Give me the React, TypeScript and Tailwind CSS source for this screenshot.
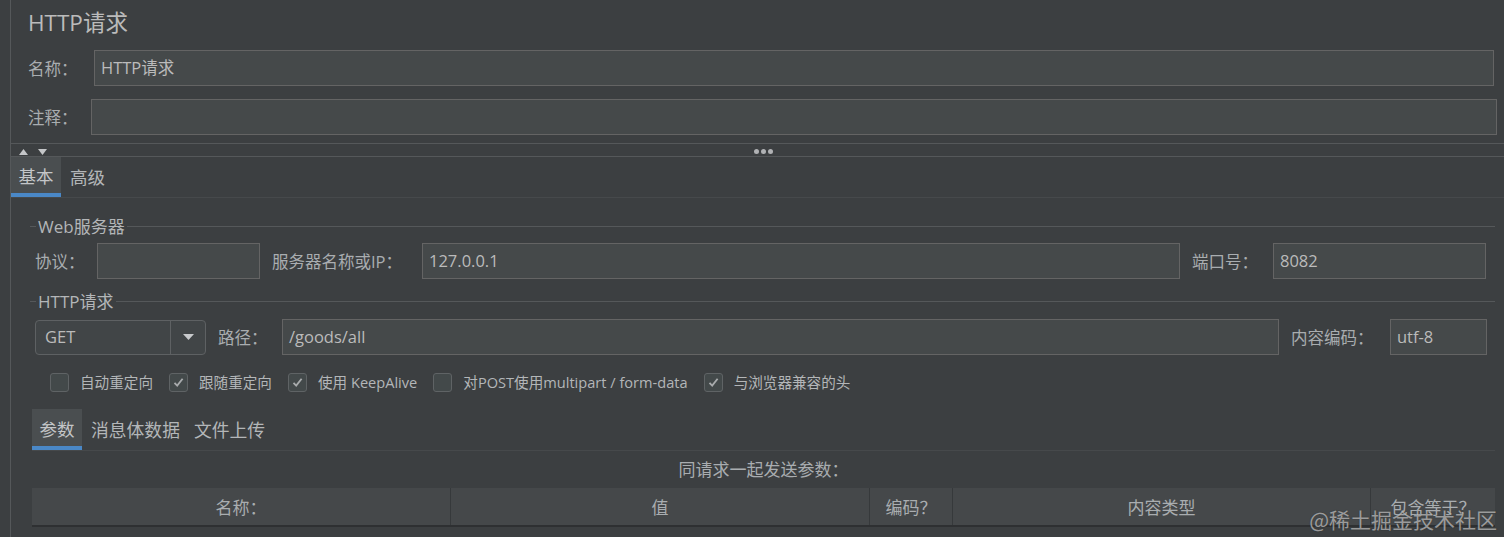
import React from "react";

const font = "font-['Open_Sans','Noto_Sans_CJK_SC',sans-serif]";

function Field({ value = "", className = "" }: { value?: string; className?: string }) {
  return (
    <div
      className={`h-[36px] bg-[#45494a] border border-[#646464] flex items-center px-[6px] text-[16.5px] text-[#bbbbbb] ${className}`}
    >
      {value}
    </div>
  );
}

function Label({ text, className = "" }: { text: string; className?: string }) {
  return <div className={`shrink-0 pt-[2px] text-[16.5px] text-[#a9adb0] ${className}`}>{text}</div>;
}

function GroupTitle({ text }: { text: string }) {
  return (
    <div className="flex items-center h-[20px] pl-[19px] pr-[9px]">
      <div className="w-[6px] h-px bg-[#55585a]" />
      <div className="px-[2px] text-[17px] text-[#b3b6b8] leading-none">{text}</div>
      <div className="flex-1 h-px bg-[#55585a]" />
    </div>
  );
}

function Check({ checked, label }: { checked: boolean; label: string }) {
  return (
    <div className="flex items-center mr-[16px]">
      <div className="w-[19px] h-[19px] rounded-[3px] border border-[#5f6365] bg-[#43494a] flex items-center justify-center">
        {checked && (
          <svg width="13" height="13" viewBox="0 0 13 13">
            <path d="M2.5 6.8 L5.2 9.6 L10.6 2.8" fill="none" stroke="#a8abad" strokeWidth="1.8" />
          </svg>
        )}
      </div>
      <div className="ml-[11px] text-[14.6px] text-[#b3b6b8]">{label}</div>
    </div>
  );
}

function HeaderCell({ text, w, first = false }: { text: string; w: string; first?: boolean }) {
  return (
    <div
      className={`${w} h-full flex items-center justify-center pt-[2px] text-[17px] text-[#a9adb0] ${
        first ? "" : "border-l border-[#36393b]"
      }`}
    >
      {text}
    </div>
  );
}

export default function App() {
  return (
    <div className={`relative w-[1504px] h-[537px] bg-[#3c3f41] flex overflow-hidden ${font}`}>
      {/* left gutter */}
      <div className="w-[10px] shrink-0 bg-[#3c3f41]" />
      <div className="w-px shrink-0 bg-[#55585a]" />

      <div className="flex-1 flex flex-col">
        {/* title */}
        <div className="h-[44px] flex items-center pl-[17px] pt-[2px] text-[22.5px] text-[#bbbbbb]">HTTP请求</div>

        {/* name / comment */}
        <div className="mt-[6px] flex items-center pl-[17px] pr-[10px]">
          <Label text="名称：" className="w-[66px]" />
          <Field value="HTTP请求" className="flex-1" />
        </div>
        <div className="mt-[13px] flex items-center pl-[17px] pr-[7px]">
          <Label text="注释：" className="w-[63px]" />
          <Field className="flex-1" />
        </div>

        {/* splitter */}
        <div className="mt-[8px] h-[14px] border-y border-[#55585a] relative flex items-center">
          <div className="flex items-center gap-[10px] pl-[8px] pt-[3px]">
            <svg width="9" height="6" viewBox="0 0 9 6">
              <path d="M0 6 L4.5 0 L9 6 Z" fill="#c4c6c8" />
            </svg>
            <svg width="9" height="6" viewBox="0 0 9 6">
              <path d="M0 0 L9 0 L4.5 6 Z" fill="#c4c6c8" />
            </svg>
          </div>
          <div className="absolute left-[743px] top-[5px] flex gap-[2px]">
            <div className="w-[5px] h-[5px] rounded-full bg-[#b0b2b4]" />
            <div className="w-[5px] h-[5px] rounded-full bg-[#b0b2b4]" />
            <div className="w-[5px] h-[5px] rounded-full bg-[#b0b2b4]" />
          </div>
        </div>

        {/* main tabs */}
        <div className="h-[41px] flex border-b border-[#46494b]">
          <div className="w-[50px] h-full bg-[#4a4e50] flex flex-col">
            <div className="flex-1 flex items-center justify-center pt-[3px] text-[17.5px] text-[#c4c6c8]">基本</div>
            <div className="h-[4px] bg-[#4a88c7]" />
          </div>
          <div className="h-full flex items-center pl-[9px] pt-[1px] text-[17.5px] text-[#b3b6b8]">高级</div>
        </div>

        {/* web server */}
        <div className="mt-[18px]">
          <GroupTitle text="Web服务器" />
        </div>
        <div className="mt-[7px] flex items-center pl-[24px] pr-[18px]">
          <Label text="协议：" className="w-[62px]" />
          <Field className="w-[163px] h-[35px]" />
          <Label text="服务器名称或IP：" className="ml-[12px] w-[150px]" />
          <Field value="127.0.0.1" className="flex-1 h-[35px]" />
          <Label text="端口号：" className="ml-[12px] w-[81px]" />
          <Field value="8082" className="w-[213px] h-[35px]" />
        </div>

        {/* http request */}
        <div className="mt-[12px]">
          <GroupTitle text="HTTP请求" />
        </div>
        <div className="mt-[8px] flex items-center pl-[24px] pr-[17px]">
          <div className="w-[171px] h-[35px] rounded-[4px] border border-[#5e6163] bg-[#414547] flex">
            <div className="flex-1 flex items-center pl-[9px] text-[16.5px] text-[#bbbbbb]">GET</div>
            <div className="w-[35px] border-l border-[#5e6163] flex items-center justify-center">
              <svg width="11" height="6" viewBox="0 0 11 6">
                <path d="M0 0 L11 0 L5.5 6 Z" fill="#c8cacc" />
              </svg>
            </div>
          </div>
          <Label text="路径：" className="ml-[12px] w-[64px]" />
          <Field value="/goods/all" className="flex-1 h-[35px]" />
          <Label text="内容编码：" className="ml-[12px] w-[99px]" />
          <Field value="utf-8" className="w-[97px] h-[35px]" />
        </div>

        {/* options */}
        <div className="mt-[18px] h-[19px] flex items-center pl-[39px]">
          <Check checked={false} label="自动重定向" />
          <Check checked label="跟随重定向" />
          <Check checked label="使用 KeepAlive" />
          <Check checked={false} label="对POST使用multipart / form-data" />
          <Check checked label="与浏览器兼容的头" />
        </div>

        {/* sub tabs */}
        <div className="mt-[17px] ml-[21px] mr-[9px] h-[42px] flex border-b border-[#46494b]">
          <div className="w-[50px] h-full bg-[#4a4e50] flex flex-col">
            <div className="flex-1 flex items-center justify-center pt-[3px] text-[17.5px] text-[#c4c6c8]">参数</div>
            <div className="h-[4px] bg-[#4a88c7]" />
          </div>
          <div className="h-full flex items-center pl-[9px] pt-[1px] text-[17.8px] text-[#b3b6b8]">消息体数据</div>
          <div className="h-full flex items-center pl-[14px] pt-[1px] text-[17.8px] text-[#b3b6b8]">文件上传</div>
        </div>

        <div className="mt-[9px] h-[20px] flex items-center justify-center text-[17px] text-[#a9adb0] pl-[12px]">
          同请求一起发送参数：
        </div>

        {/* table header */}
        <div className="mt-[8px] ml-[21px] mr-[9px] h-[39px] bg-[#45484a] border-b-2 border-[#2e3032] flex">
          <HeaderCell text="名称：" w="w-[418px]" first />
          <HeaderCell text="值" w="w-[419px]" />
          <HeaderCell text="编码？" w="w-[83px]" />
          <HeaderCell text="内容类型" w="w-[418px]" />
          <HeaderCell text="包含等于？" w="flex-1" />
        </div>
      </div>

      {/* watermark */}
      <div className="absolute right-[7px] bottom-[7px] text-[21px] leading-none text-white/55 font-['Noto_Sans_CJK_SC',sans-serif] [text-shadow:0_0_1px_rgba(0,0,0,0.6)]">
        @稀土掘金技术社区
      </div>
    </div>
  );
}
